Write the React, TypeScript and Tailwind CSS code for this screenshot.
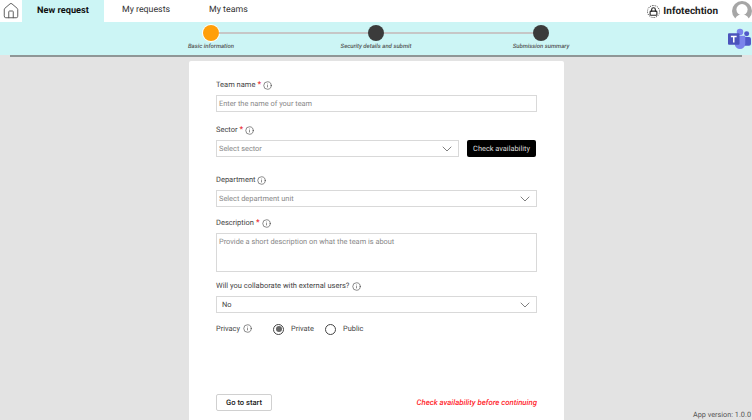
import React from 'react';
import { ChevronDown, Home, Info, Lock } from 'lucide-react';

const FONT = "font-['Roboto','Noto_Sans',sans-serif] [text-rendering:geometricPrecision]";

const TeamsLogo = () => (
    <svg viewBox="0 0 24 22" className="w-[23px] h-[22px]">
        <circle cx="19.5" cy="5.5" r="2.6" fill="#5059c9" />
        <rect x="15" y="9" width="9" height="9" rx="2" fill="#5059c9" />
        <circle cx="12.5" cy="3.6" r="3.4" fill="#7b83eb" />
        <path d="M7 7.5h11v8.5a5.5 5.5 0 0 1-11 0z" fill="#7b83eb" />
        <rect x="0" y="5" width="12" height="12" rx="1" fill="#4b53bc" />
        <path d="M3 7.6h6v1.500H6.800v5.600H5.200V9.100H3z" fill="#ffffff" />
    </svg>
);

const Avatar = () => (
    <svg viewBox="0 0 20 20" className="w-5 h-5">
        <circle cx="10" cy="10" r="10" fill="#a6a6a6" />
        <circle cx="10" cy="8.6" r="5.6" fill="#ffffff" />
        <path d="M2.5 20c1-5 4-6.5 7.5-6.5s6.500 1.500 7.500 6.500z" fill="#ffffff" />
    </svg>
);

const Label = ({ text, required, gap = 'ml-[2px]' }: { text: string; required?: boolean; gap?: string }) => (
    <div className="flex items-center h-[12px] text-[7.5px] text-[#444]">
        <span>{text}</span>
        {required && <span className="ml-[2px] text-[#e81123] text-[8.5px]">*</span>}
        <Info className={`w-[9px] h-[9px] text-[#333] ${gap}`} strokeWidth={1.5} />
    </div>
);

const Select = ({ text, dark, className }: { text: string; dark?: boolean; className: string }) => (
    <div className={`h-[17px] border border-[#d9d9d9] flex items-center justify-between pl-[2px] pr-[3px] text-[7.4px] ${dark ? 'text-[#444]' : 'text-[#888]'} ${className}`}>
        <span className={dark ? 'pl-[3px]' : ''}>{text}</span>
        <ChevronDown className="w-[16px] h-[16px] text-[#666]" strokeWidth={1.25} />
    </div>
);

export default function App() {
    return (
        <div className={`w-[752px] h-[420px] overflow-hidden flex flex-col bg-[#e3e3e3] ${FONT}`}>
            {/* Top Bar */}
            <div className="h-[22px] bg-white flex items-stretch shrink-0 text-[8.8px]">
                <div className="w-[22px] flex items-center justify-center">
                    <Home className="w-[18px] h-[18px] text-[#555]" strokeWidth={1.25} />
                </div>
                <div className="w-[82px] bg-[#ccf5f5] flex items-center justify-center font-bold text-[#111] text-[9.2px]">New request</div>
                <div className="ml-[18px] flex items-center text-[#333]">My requests</div>
                <div className="ml-[39px] flex items-center text-[#333]">My teams</div>
                <div className="ml-auto flex items-center">
                    <div className="w-[13px] h-[13px] rounded-full border border-dotted border-[#333] flex items-center justify-center">
                        <Lock className="w-[9px] h-[9px] text-[#222]" strokeWidth={3} />
                    </div>
                    <span className="ml-[3px] font-bold text-[#222] text-[10px]">Infotechtion</span>
                    <div className="ml-[14px]"><Avatar /></div>
                </div>
            </div>

            {/* Stepper */}
            <div className="relative h-[33px] bg-[#ccf5f5] shrink-0">
                <div className="flex items-center justify-center pt-[3px]">
                    <div className="w-4 h-4 rounded-full bg-[#ff9f0a] ring-1 ring-white" />
                    <div className="w-[149px] h-[2px] bg-[#c6c6c6]" />
                    <div className="w-4 h-4 rounded-full bg-[#3b3b3b]" />
                    <div className="w-[149px] h-[2px] bg-[#c6c6c6]" />
                    <div className="w-4 h-4 rounded-full bg-[#3b3b3b]" />
                </div>
                <div className="flex justify-center mt-[2px] text-[6px] italic font-medium text-[#555] leading-[8px]">
                    <div className="w-[165px] text-center">Basic information</div>
                    <div className="w-[165px] text-center">Security details and submit</div>
                    <div className="w-[165px] text-center">Submission summary</div>
                </div>
                <div className="absolute right-[1px] top-[6px]"><TeamsLogo /></div>
            </div>
            <div className="mx-[10px] h-[2px] bg-[#8f9696] shrink-0" />

            {/* Form */}
            <div className="flex-1 grid grid-cols-[189px_375px_1fr] min-h-0">
                <div />
                <div className="mt-[4px] bg-white rounded-t-[2px] px-[27px] pt-[18px] flex flex-col">
                    <Label text="Team name" required />
                    <div className="mt-[4px] h-[17px] border border-[#d9d9d9] flex items-center pl-[2px] text-[7.4px] text-[#888]">Enter the name of your team</div>

                    <div className="mt-[12px]"><Label text="Sector" required /></div>
                    <div className="mt-[4px] flex items-center">
                        <Select text="Select sector" className="w-[243px]" />
                        <div className="ml-[8px] w-[69px] h-[17px] rounded-[2px] bg-black text-[#ddd] text-[7.4px] flex items-center justify-center">Check availability</div>
                    </div>

                    <div className="mt-[17px]"><Label text="Department" gap="ml-[1px]" /></div>
                    <Select text="Select department unit" className="mt-[4px]" />

                    <div className="mt-[10px]"><Label text="Description" required /></div>
                    <div className="mt-[4px] h-[39px] border border-[#d9d9d9] pl-[2px] pt-[2px] text-[7.4px] text-[#888]">Provide a short description on what the team is about</div>

                    <div className="mt-[8px]"><Label text="Will you collaborate with external users?" gap="ml-[3px]" /></div>
                    <Select text="No" dark className="mt-[4px]" />

                    <div className="mt-[9px] flex items-center h-[14px] text-[7.4px] text-[#444]">
                        <div className="w-[57px] flex items-center">
                            <span>Privacy</span>
                            <Info className="w-[9px] h-[9px] text-[#333] ml-[3px]" strokeWidth={1.5} />
                        </div>
                        <div className="w-[11px] h-[11px] rounded-full border border-[#444] flex items-center justify-center">
                            <div className="w-[6px] h-[6px] rounded-full bg-[#666]" />
                        </div>
                        <span className="ml-[7px] w-[22px]">Private</span>
                        <div className="ml-[12px] w-[11px] h-[11px] rounded-full border border-[#444]" />
                        <span className="ml-[7px]">Public</span>
                    </div>

                    <div className="mt-[58px] flex items-center justify-between">
                        <div className="w-[56px] h-[17px] border border-[#d0d0d0] rounded-[2px] flex items-center justify-center text-[7.6px] font-medium text-[#222]">Go to start</div>
                        <span className="text-[7.8px] italic font-medium text-[#ff1f2d]">Check availability before continuing</span>
                    </div>
                </div>
                <div className="flex items-end justify-end pr-[1px] text-[7.3px] leading-[10px] text-[#555]">App version: 1.0.0</div>
            </div>
        </div>
    );
}
